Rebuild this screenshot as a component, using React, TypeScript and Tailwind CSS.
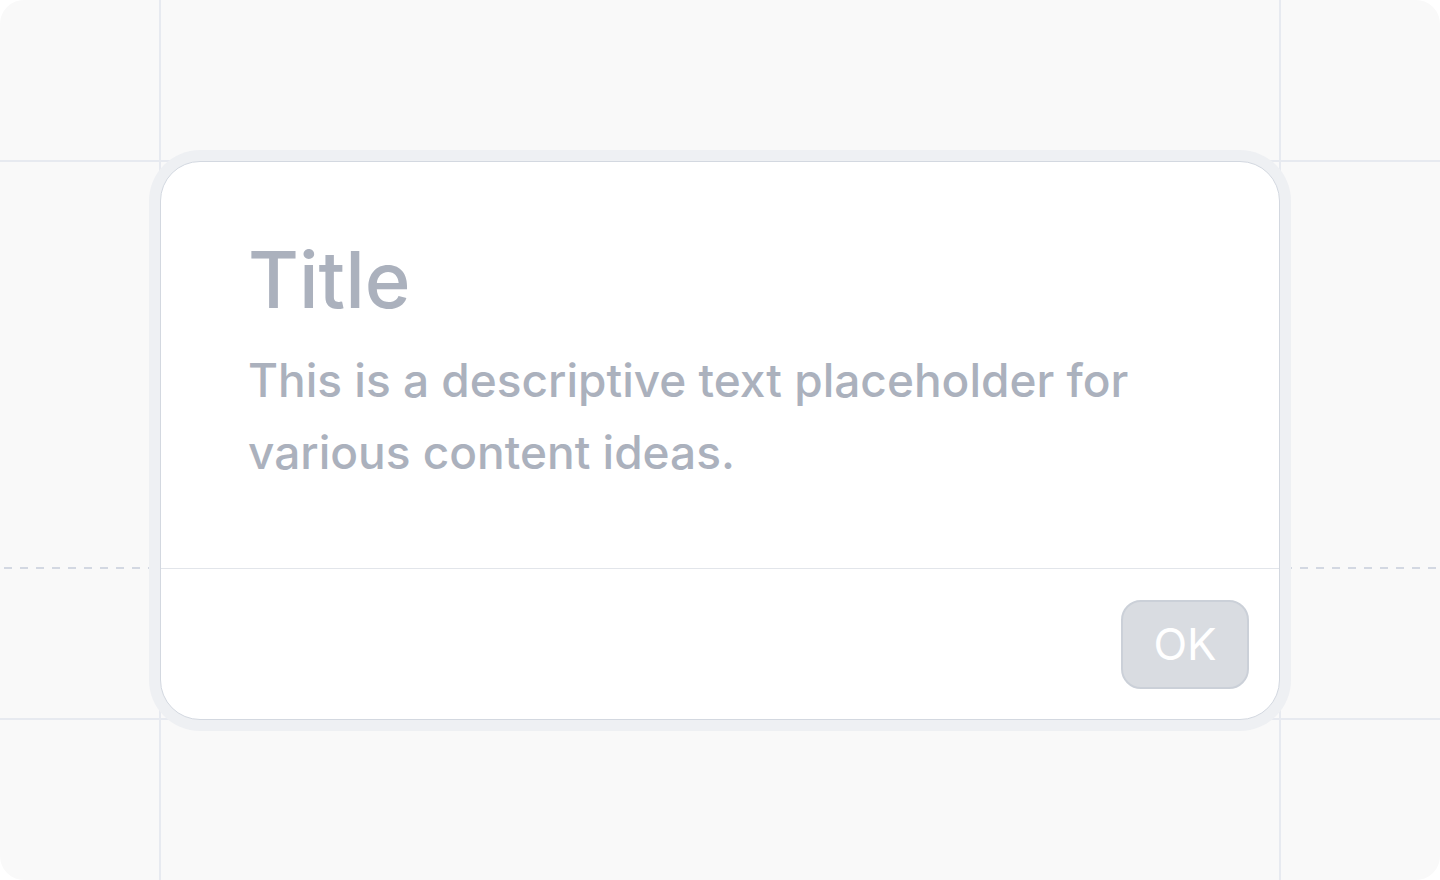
export default function App() {
  return (
    <div className="h-[880px] w-[1440px] bg-white" style={{ fontFamily: "Inter, 'Noto Sans', sans-serif" }}>
      <div className="relative h-full w-full overflow-hidden rounded-[24px] bg-[#f9f9f9] pl-[160px] pt-[161px]">
        {/* canvas guide lines */}
        <div className="absolute left-[159px] top-0 h-full w-[2px] bg-[#e7eaf0]" />
        <div className="absolute left-[1279px] top-0 h-full w-[2px] bg-[#e7eaf0]" />
        <div className="absolute left-0 top-[160px] h-[2px] w-full bg-[#e7eaf0]" />
        <div className="absolute left-0 top-[718px] h-[2px] w-full bg-[#e7eaf0]" />
        <div className="absolute left-0 top-[567px] h-[2px] w-full bg-[repeating-linear-gradient(90deg,transparent_0_4px,#d3d8e2_4px_12px,transparent_12px_16px)]" />

        <div className="relative flex h-[559px] w-[1120px] flex-col overflow-hidden rounded-[40px] border-[1.5px] border-[#d3d8e0] bg-white shadow-[0_0_0_11px_#eef0f3]">
          <div className="flex h-[406px] flex-col px-[87px] pt-[69px] font-medium text-[#abb1bd]">
            <h1 className="text-[78px] leading-[98px]">Title</h1>
            <p className="mt-[15px] text-[46px] leading-[72px]">
              This is a descriptive text placeholder for
              <br />
              various content ideas.
            </p>
          </div>
          <div className="flex flex-1 items-center justify-end border-t-[1.5px] border-[#e2e5ea] pr-[30px]">
            <button className="flex h-[89px] w-[128px] items-center justify-center rounded-[20px] border-2 border-[#cbd0d8] bg-[#d9dce1] text-[44px] text-white">
              OK
            </button>
          </div>
        </div>
      </div>
    </div>
  );
}
